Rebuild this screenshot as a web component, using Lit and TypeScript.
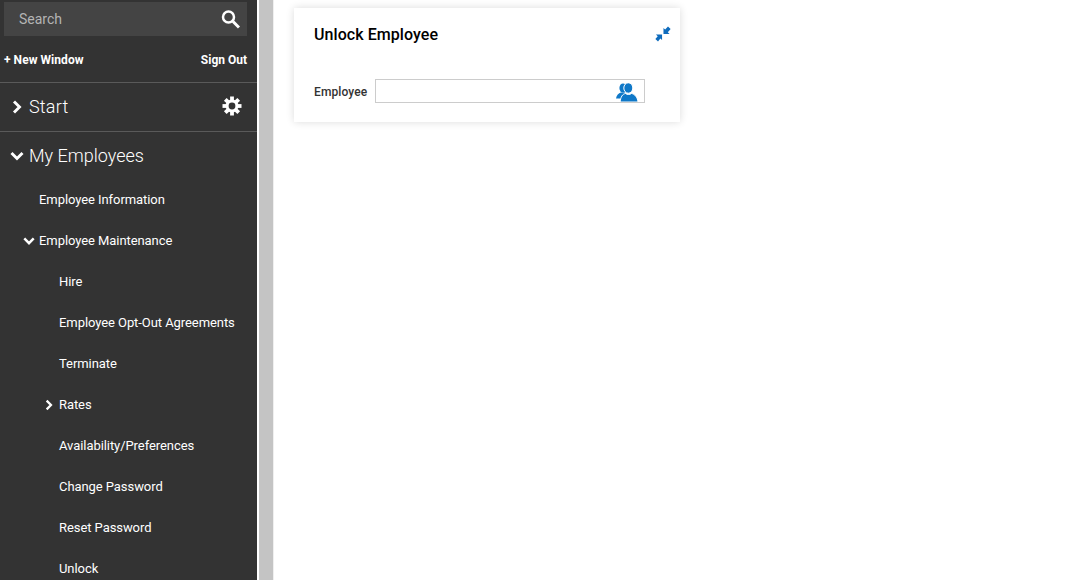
import { LitElement, html, css, svg } from "lit";
import { customElement } from "lit/decorators.js";

const right = svg`<path d="M2 1.500 L7.500 7 L2 12.500" fill="none" stroke="currentColor" stroke-width="2.900"/>`;
const down = svg`<path d="M1.500 2 L7 7.500 L12.500 2" fill="none" stroke="currentColor" stroke-width="2.900"/>`;

@customElement("app-root")
export class AppRoot extends LitElement {
  static styles = css`
    :host { display: flex; width: 1067px; height: 580px; overflow: hidden; background: #fff; font-family: Roboto, "Liberation Sans", sans-serif; }
    .side { width: 257px; flex: none; background: #333; color: #fff; height: 580px; overflow: hidden; box-sizing: border-box; padding-top: 2px; }
    .divider { width: 14px; flex: none; background: #c4c4c4; margin-left: 2px; border-right: 1px solid #efefef; }
    .search { margin: 0 10px 0 4px; height: 34px; background: #444; display: flex; align-items: center; justify-content: space-between; padding: 0 7px 0 15px; font-size: 14px; color: #b4b4b4; }
    .links { display: flex; justify-content: space-between; margin: 0 10px 0 4px; height: 46px; box-sizing: border-box; padding-top: 2px; align-items: center; font-size: 12px; font-weight: 700; }
    .new { letter-spacing: .05px; }
    .sec { display: flex; align-items: center; border-top: 1px solid #5a5a5a; height: 48px; box-sizing: content-box; font-size: 18px; font-weight: 300; padding-left: 12px; }
    .sec .label { margin-bottom: 2px; }
    .start { letter-spacing: .2px; }
    .sec svg.chev { margin-right: 7px; }
    .sec .gear { margin-left: auto; margin-right: 15px; margin-bottom: 2px; }
    .sec.my { padding-left: 10px; }
    .sec.my svg.chev { margin-right: 5px; }
    .item { height: 41px; display: flex; align-items: center; font-size: 13px; letter-spacing: -.07px; position: relative; }
    .first { margin-top: -1px; }
    .l1 { padding-left: 39px; }
    .l2 { padding-left: 59px; }
    .mark { position: absolute; top: 50%; transform: translateY(-50%); }
    .mark.m1 { left: 23px; }
    .mark.m2 { left: 45px; }
    .main { flex: 1; min-width: 0; }
    .card { margin: 8px 0 0 20px; width: 386px; height: 114px; box-sizing: border-box; background: #fff; box-shadow: 0 0 8px rgba(0,0,0,.14); padding: 17px 9px 0 20px; }
    .head { display: flex; justify-content: space-between; align-items: flex-start; }
    .title { font-size: 16px; font-weight: 500; color: #000; line-height: 20px; letter-spacing: .07px; }
    .pin { margin-top: 1px; }
    .row { display: flex; align-items: center; margin-top: 34px; }
    .row label { font-size: 12px; font-weight: 500; color: #333; width: 61px; padding-top: 2px; letter-spacing: .1px; }
    .input { width: 270px; height: 24px; box-sizing: border-box; border: 1px solid #ccc; display: flex; align-items: center; justify-content: flex-end; padding-right: 6px; }
    .who { margin-top: 3px; }
  `;

  render() {
    return html`
      <nav class="side">
        <div class="search">
          <span>Search</span>
          <svg width="20" height="20" viewBox="0 0 20 20"><circle cx="8.500" cy="8" r="5.500" fill="none" stroke="#fff" stroke-width="2.500"/><path d="M13 12.500 L19 18.500" stroke="#fff" stroke-width="3"/></svg>
        </div>
        <div class="links"><span class="new">+ New Window</span><span>Sign Out</span></div>
        <div class="sec">
          <svg class="chev" width="10" height="14" viewBox="0 0 10 14">${right}</svg>
          <span class="label start">Start</span>
          <svg class="gear" width="20" height="20" viewBox="0 0 20 20">
            <g fill="#fff">
              <circle cx="10" cy="10" r="6.500"/>
              ${[0,45,90,135,180,225,270,315].map((a) => svg`<rect x="8.100" y="0.500" width="3.800" height="4.500" transform="rotate(${a} 10 10)"/>`)}
            </g>
            <circle cx="10" cy="10" r="3.400" fill="#333"/>
          </svg>
        </div>
        <div class="sec my">
          <svg class="chev" width="14" height="10" viewBox="0 0 14 10">${down}</svg>
          <span class="label">My Employees</span>
        </div>
        <div class="item l1 first">Employee Information</div>
        <div class="item l1"><svg class="mark m1" width="12" height="9" viewBox="0 0 14 10">${down}</svg>Employee Maintenance</div>
        <div class="item l2">Hire</div>
        <div class="item l2">Employee Opt-Out Agreements</div>
        <div class="item l2">Terminate</div>
        <div class="item l2"><svg class="mark m2" width="8" height="11" viewBox="0 0 10 14">${right}</svg>Rates</div>
        <div class="item l2">Availability/Preferences</div>
        <div class="item l2">Change Password</div>
        <div class="item l2">Reset Password</div>
        <div class="item l2">Unlock</div>
      </nav>
      <div class="divider"></div>
      <main class="main">
        <section class="card">
          <div class="head">
            <div class="title">Unlock Employee</div>
            <svg class="pin" width="16" height="16" viewBox="0 0 17 17" fill="#0f6cbd" stroke="none">
              <path d="M9 2 V8.500 H15.500 L13.600 6.600 L16.600 3.200 L13.800 .4 L10.800 3.800 Z"/>
              <path d="M7.500 15 V9 H1 L2.900 10.900 L.4 13.800 L3.200 16.600 L5.700 13.200 Z"/>
            </svg>
          </div>
          <div class="row">
            <label>Employee</label>
            <div class="input">
              <svg class="who" width="22" height="19" viewBox="0 0 22 19" fill="#0f78c8">
                <ellipse cx="7" cy="5" rx="3.600" ry="4.600"/>
                <path d="M0 15.500 C.5 12 2.500 10 5 9.500 H9 V15.500 Z"/>
                <g stroke="#fff" stroke-width="1">
                  <ellipse cx="12.300" cy="5" rx="4.500" ry="5.200"/>
                  <path d="M4.200 19 C4.500 14 6.500 11 9.500 10.500 C11 11.800 14 11.800 15.500 10.500 C18.500 11 21.500 14 22 19 Z"/>
                </g>
              </svg>
            </div>
          </div>
        </section>
      </main>
    `;
  }
}
